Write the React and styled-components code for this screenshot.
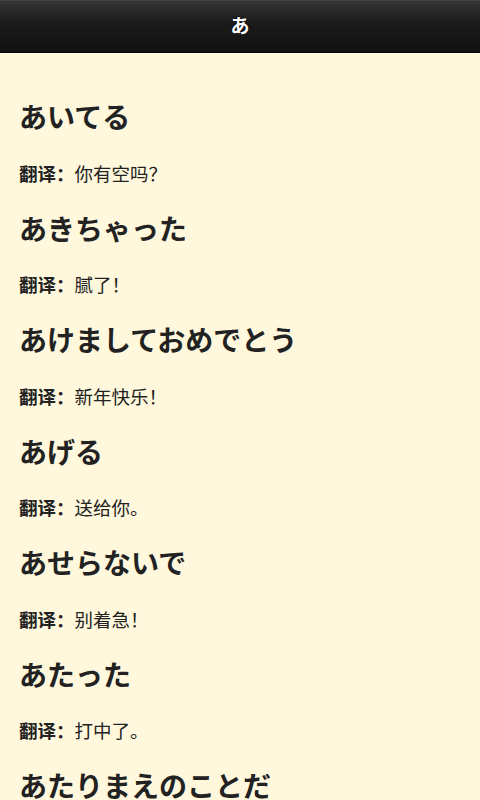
import React from "react";
import styled, { createGlobalStyle } from "styled-components";

const GlobalStyle = createGlobalStyle`
  html, body {
    margin: 0;
    padding: 0;
    background: #fff8dc;
  }
  body {
    font-family: "Noto Sans CJK JP", "Noto Sans CJK SC", sans-serif;
    color: #222;
  }
`;

// screen sized page, list runs under the bottom edge like the phone
const Page = styled.div`
  width: 480px;
  height: 800px;
  background: #fff8dc;
  overflow: hidden;
`;

const Header = styled.header`
  height: 53px;
  display: flex;
  align-items: center;
  justify-content: center;
  background: linear-gradient(#353535, #1a1a1a 45%, #111111);
  border-top: 1px solid #444;
  border-bottom: 1px solid #000;
  box-sizing: border-box;
`;

const Title = styled.h1`
  margin: 0 0 5px;
  font-size: 19px;
  font-weight: 700;
  color: #fff;
  text-shadow: 0 -1px 1px #000;
`;

const Content = styled.main`
  padding: 45px 20px 0 19px;
`;

const Word = styled.h2`
  margin: 0;
  font-family: "Noto Sans CJK JP", sans-serif;
  font-size: 28px;
  line-height: 36px;
  font-weight: 700;
  color: #222;
  white-space: nowrap;
`;

const Meaning = styled.p`
  margin: 26.5px 0 25px;
  font-family: "Noto Sans CJK SC", sans-serif;
  font-size: 18.5px;
  line-height: 24px;
  color: #222;
  white-space: nowrap;
`;

const Label = styled.strong`
  font-weight: 700;
`;

const words = [
  ["あいてる", "你有空吗？"],
  ["あきちゃった", "腻了！"],
  ["あけましておめでとう", "新年快乐！"],
  ["あげる", "送给你。"],
  ["あせらないで", "别着急！"],
  ["あたった", "打中了。"],
  ["あたりまえのことだ", null],
];

export default function App() {
  return (
    <>
      <GlobalStyle />
      <Page>
        <Header>
          <Title>あ</Title>
        </Header>
        <Content>
          {words.map(([jp, cn]) => (
            <div key={jp}>
              <Word>{jp}</Word>
              {cn && (
                <Meaning>
                  <Label>翻译：</Label>
                  {cn}
                </Meaning>
              )}
            </div>
          ))}
        </Content>
      </Page>
    </>
  );
}
